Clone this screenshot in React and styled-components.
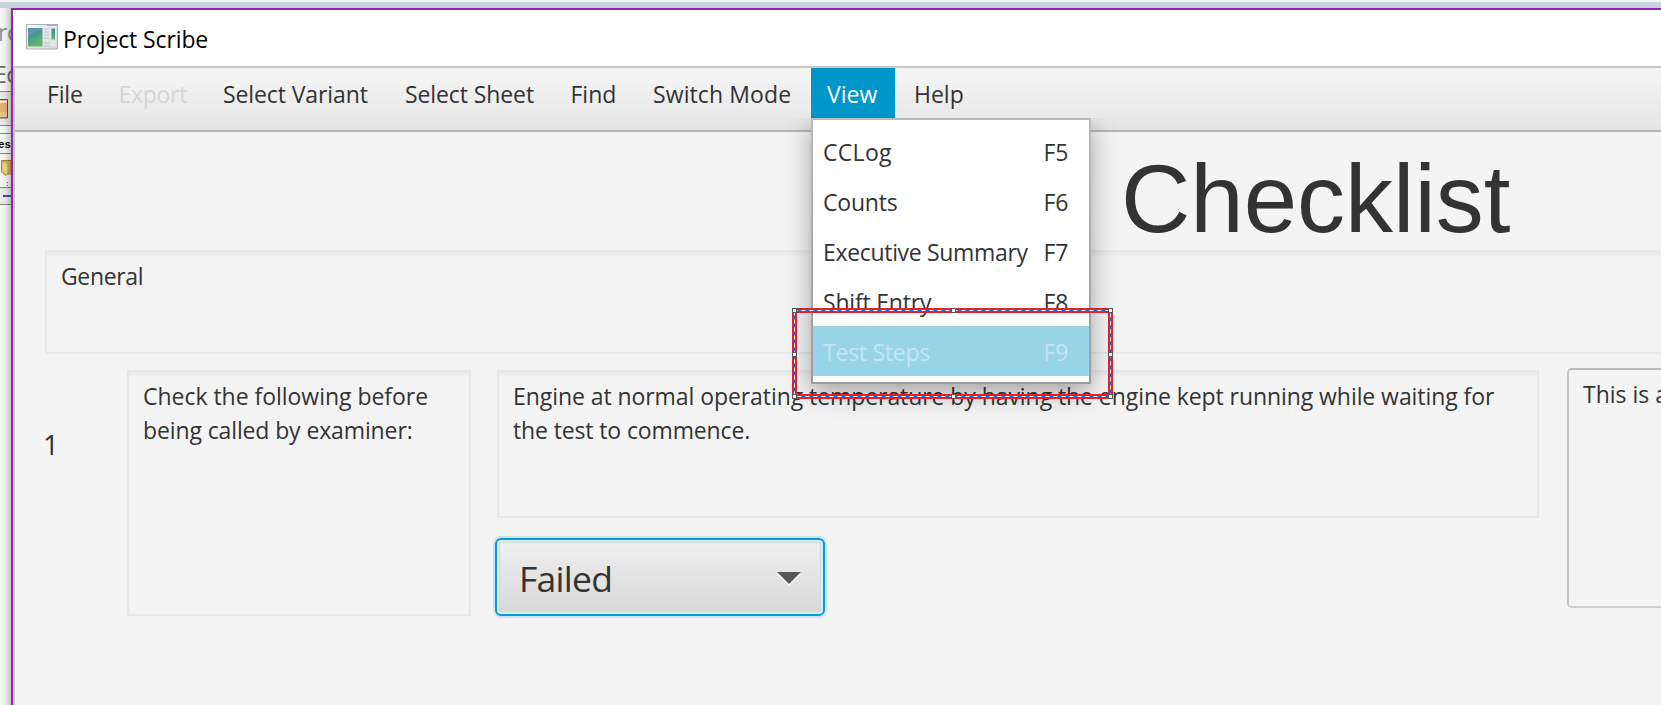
import React from "react";
import styled, { createGlobalStyle } from "styled-components";

const GlobalStyle = createGlobalStyle`
  * { box-sizing: border-box; }
  body {
    margin: 0;
    overflow: hidden;
    background: #fff;
    color: #333;
    font: 23px/34px "Open Sans", "Noto Sans", sans-serif;
  }
`;

const Desktop = styled.div`
  position: relative;
  display: flex;
  flex-direction: column;
  width: 1661px;
  height: 705px;
  overflow: hidden;
`;

const DesktopEdge = styled.div`
  flex: none;
  height: 8px;
  border-top: 2px solid #f1f4f7;
  background: linear-gradient(#cfd2d6 1px, #c5d0e1 1px);
`;

const DesktopBody = styled.div`
  flex: 1;
  display: flex;
  min-height: 0;
`;

const BackWindow = styled.aside`
  position: relative;
  flex: none;
  display: flex;
  flex-direction: column;
  width: 11px;
  overflow: hidden;
  white-space: nowrap;
  background: #fafafa;

  &::after {
    content: "";
    position: absolute;
    inset: 0;
    background: linear-gradient(90deg, rgba(0, 0, 0, 0) 0%, rgba(0, 0, 0, 0.06) 50%, rgba(0, 0, 0, 0.22) 100%);
  }
`;

const BackText = styled.div`
  height: ${(p) => p.$height}px;
  line-height: ${(p) => p.$line}px;
  margin-left: ${(p) => p.$shift}px;
  letter-spacing: -0.5px;
  color: ${(p) => p.$color};
`;

const BackTool = styled.div`
  display: flex;
  align-items: center;
  height: 35px;
  border-top: 1px solid #8d8d8d;
  border-bottom: 1px solid #8d8d8d;
  background: #ececec;
`;

const BackHeader = styled.div`
  height: 21px;
  margin-top: 7px;
  border-top: 1px solid #8b8b93;
  border-bottom: 1px solid #8b8b93;
  font: bold 11.5px/21px "Liberation Sans", sans-serif;
  color: #000;
  text-indent: -2px;
`;

const BackTree = styled.div`
  height: 34px;
  padding: 6px 0 0 1px;
  border-bottom: 1px solid #8b8b93;
  svg { display: block; }
`;

const BackStatus = styled.div`
  height: 17px;
  padding: 7px 0 0 3px;
  border-bottom: 1px solid #8b8b93;
  background: #eeeeee;
  &::before {
    content: "";
    display: block;
    height: 2px;
    background: #4254a4;
  }
`;

const Window = styled.main`
  flex: 1;
  display: flex;
  flex-direction: column;
  min-width: 0;
  border-top: 2px solid #8f2b9f;
  border-left: 2px solid #8f2b9f;
  background: #fff;
`;

const TitleBar = styled.header`
  flex: none;
  display: flex;
  align-items: center;
  gap: 5px;
  height: 56px;
  padding: 1px 0 0 13px;
  letter-spacing: -0.12px;
  color: #000;
  svg { margin-top: -4px; }
`;

const Client = styled.div`
  flex: 1;
  display: flex;
  flex-direction: column;
  min-height: 0;
  border-top: 2px solid #c8c8c8;
  border-left: 2px solid #c8c6c8;
  background: #f4f4f4;
`;

const MenuBar = styled.nav`
  flex: none;
  display: flex;
  align-items: flex-start;
  height: 64px;
  padding-left: 16px;
  border-bottom: 2px solid #b5b5b5;
  background: linear-gradient(#f4f4f4 15%, #e4e4e4);
`;

const MenuButton = styled.div`
  position: relative;
  flex: none;
  width: ${(p) => p.$width}px;
  height: 50px;
  padding-left: 16px;
  line-height: 52px;
  white-space: nowrap;
  letter-spacing: ${(p) => p.$spacing || 0}px;
  color: ${(p) => (p.$active ? "#fff" : p.$disabled ? "#d6d6d6" : "#333")};
  background: ${(p) => (p.$active ? "#0096c9" : "transparent")};
`;

const Dropdown = styled.div`
  position: absolute;
  z-index: 2;
  top: 50px;
  left: 0;
  width: 280px;
  padding: 6px 0;
  border: 2px solid #b5b5b5;
  border-image: linear-gradient(#b9b9b9, #9c9c9c) 1;
  background: #fff;
  box-shadow: 0 8px 24px rgba(0, 0, 0, 0.34);
  clip-path: inset(0 -40px -50px -40px);
`;

const DropdownItem = styled.div`
  display: flex;
  justify-content: space-between;
  height: 50px;
  padding: 0 21px 0 10px;
  line-height: 52px;
  letter-spacing: ${(p) => p.$spacing}px;
  color: ${(p) => (p.$selected ? "#c3e6f2" : "#333")};
  background: ${(p) => (p.$selected ? "#99d5e9" : "transparent")};
`;

const Shortcut = styled.span`
  letter-spacing: -0.3px;
`;

const Heading = styled.h1`
  flex: none;
  height: 118px;
  margin: 0;
  padding: 8px 0 0 1106px;
  font: 400 96px/118px "Liberation Sans", Arial, sans-serif;
`;

const Field = styled.div`
  flex: none;
  width: ${(p) => p.$width}px;
  height: ${(p) => p.$height}px;
  padding: 7px 14px;
  border: 2px solid #e8e8e8;
  box-shadow: inset 0 4px 4px -2px rgba(0, 0, 0, 0.05);
  white-space: nowrap;
`;

const GeneralField = styled(Field)`
  margin-left: 30px;
  letter-spacing: -0.35px;
`;

const NoteField = styled(Field)`
  margin: -2px 0 0 28px;
  border-color: #bababa #c4c4c4 #cccccc;
  border-radius: 5px;
  box-shadow: none;
`;

const Line = styled.div`
  letter-spacing: ${(p) => p.$spacing || 0}px;
`;

const StepRow = styled.section`
  display: flex;
  align-items: flex-start;
  margin-top: 16px;
  padding-left: 28px;
`;

const StepNumber = styled.div`
  flex: none;
  width: 84px;
  padding-top: 57px;
  font-size: 28px;
`;

const StepDetail = styled.div`
  display: flex;
  flex-direction: column;
  gap: 20px;
  margin-left: 26px;
`;

const ResultSelect = styled.div`
  display: flex;
  align-items: center;
  justify-content: space-between;
  width: 330px;
  height: 78px;
  margin-left: -2px;
  padding: 1px 19px 0 22px;
  border: 2px solid #039ed3;
  border-radius: 6px;
  background: linear-gradient(#efefef, #d8d8d8);
  box-shadow:
    0 0 0 2px rgba(3, 158, 211, 0.16),
    inset 0 0 0 2px #dcebf0,
    inset 0 0 0 3px #c6dde4;
  font-size: 35.5px;
  line-height: 74px;
  letter-spacing: -0.75px;
`;

const Selection = styled.svg`
  position: absolute;
  z-index: 3;
  left: 790px;
  top: 306px;
`;

const AppIcon = () => (
  <svg width="32" height="26" viewBox="0 0 32 26">
    <defs>
      <linearGradient id="pane" x1="0" y1="0" x2="0.4" y2="1">
        <stop offset="0" stopColor="#4e7fae" />
        <stop offset="0.5" stopColor="#4a9a90" />
        <stop offset="1" stopColor="#64b86c" />
      </linearGradient>
      <linearGradient id="frame" x1="0" y1="0" x2="1" y2="1">
        <stop offset="0" stopColor="#f6f8f9" />
        <stop offset="1" stopColor="#d6dadd" />
      </linearGradient>
    </defs>
    <rect x="0.5" y="0.5" width="31" height="24.5" fill="url(#frame)" stroke="#a9b0b8" />
    <path d="M21 1.5h10" stroke="#aab3ba" />
    <rect x="2" y="4" width="14.5" height="18.5" fill="url(#pane)" />
    <path d="M2 13Q7 7 16.5 6V4H2z" fill="#fff" opacity=".1" />
    <path d="M18 5h5M18 8h5M18 11h5M18 14h5M18 19h5M18 22h5" stroke="#cbd0d3" strokeWidth="1.3" />
    <path d="M25 18h5M25 21h5" stroke="#e6e9eb" strokeWidth="1.3" />
    <rect x="25.5" y="4.5" width="3.5" height="11" fill="url(#pane)" />
  </svg>
);

const BookIcon = () => (
  <svg width="9" height="22" viewBox="0 0 9 22">
    <path d="M0 1.5H7.5V20H0" fill="#e6b273" stroke="#6e4b1e" />
    <path d="M0 2.5H7V5H0" fill="#f8ead0" />
    <path d="M0 14H7V19H0" fill="#efc48c" />
  </svg>
);

const FolderIcon = () => (
  <svg width="10" height="27" viewBox="0 0 10 27">
    <path d="M.5.5H10V14H5V15.5L.5 12z" fill="#dfb95f" stroke="#a8842f" />
    <path d="M1 1L7 3V13L5 15L1 12z" fill="#f2d98a" stroke="#b7943d" strokeWidth=".7" />
    <path d="M6.5 22v1M6.5 25v1" stroke="#777" />
  </svg>
);

const MENUS = [
  { label: "File", width: 71.5, spacing: -0.2 },
  { label: "Export", width: 104.5, disabled: true, spacing: -0.3 },
  { label: "Select Variant", width: 182, spacing: -0.1 },
  { label: "Select Sheet", width: 165.5, spacing: -0.1 },
  { label: "Find", width: 82.5 },
  { label: "Switch Mode", width: 174, spacing: 0.1 },
  { label: "View", width: 84, active: true },
  { label: "Help", width: 84, nudge: true },
];

const HelpButton = styled(MenuButton)`
  padding-left: 19px;
`;

const VIEW_ITEMS = [
  { label: "CCLog", shortcut: "F5", spacing: 0.3 },
  { label: "Counts", shortcut: "F6", spacing: -0.2 },
  { label: "Executive Summary", shortcut: "F7", spacing: -0.32 },
  { label: "Shift Entry", shortcut: "F8", spacing: -0.2 },
  { label: "Test Steps", shortcut: "F9", spacing: -0.25, selected: true },
];

const HANDLES = [
  [4.5, 4.5], [163.5, 4.5], [320.5, 4.5],
  [4.5, 48.5], [320.5, 48.5],
  [4.5, 90.5], [163.5, 90.5], [320.5, 90.5],
];

const ViewMenu = () => (
  <Dropdown>
    {VIEW_ITEMS.map((item) => (
      <DropdownItem key={item.label} $selected={item.selected} $spacing={item.spacing}>
        <span>{item.label}</span>
        <Shortcut>{item.shortcut}</Shortcut>
      </DropdownItem>
    ))}
  </Dropdown>
);

export default function App() {
  return (
    <>
      <GlobalStyle />
      <Desktop>
        <DesktopEdge />
        <DesktopBody>
          <BackWindow>
            <BackText $height={47} $line={48} $shift={-2} $color="#8b95a3">ro</BackText>
            <BackText $height={36} $line={38} $shift={-6} $color="#6b6b6b">Ec</BackText>
            <BackTool><BookIcon /></BackTool>
            <BackHeader>es</BackHeader>
            <BackTree><FolderIcon /></BackTree>
            <BackStatus />
          </BackWindow>
          <Window>
            <TitleBar>
              <AppIcon />
              Project Scribe
            </TitleBar>
            <Client>
              <MenuBar>
                {MENUS.map((m) => {
                  const Button = m.nudge ? HelpButton : MenuButton;
                  return (
                    <Button key={m.label} $width={m.width} $active={m.active} $disabled={m.disabled} $spacing={m.spacing}>
                      {m.label}
                      {m.active && <ViewMenu />}
                    </Button>
                  );
                })}
              </MenuBar>
              <Heading>Checklist</Heading>
              <GeneralField $width={1640} $height={104}>General</GeneralField>
              <StepRow>
                <StepNumber>1</StepNumber>
                <Field $width={344} $height={246}>
                  <Line $spacing={-0.03}>Check the following before</Line>
                  <Line $spacing={-0.12}>being called by examiner:</Line>
                </Field>
                <StepDetail>
                  <Field $width={1042} $height={148}>
                    <Line $spacing={-0.07}>
                      Engine at normal operating temperature by having the engine kept running while waiting for
                    </Line>
                    <Line $spacing={-0.13}>the test to commence.</Line>
                  </Field>
                  <ResultSelect>
                    Failed
                    <svg width="30" height="16" viewBox="0 0 30 16">
                      <path d="M3 4H27L15 16z" fill="#fff" opacity=".8" />
                      <path d="M3 2H27L15 14z" fill="#575757" />
                    </svg>
                  </ResultSelect>
                </StepDetail>
                <NoteField $width={200} $height={240}>This is a</NoteField>
              </StepRow>
            </Client>
          </Window>
        </DesktopBody>
        <Selection width="326" height="96" viewBox="0 0 326 96">
          <rect x="4.5" y="4.5" width="316" height="86" fill="none" stroke="#ed1c24" strokeWidth="5" />
          <rect x="4.5" y="4.5" width="316" height="86" fill="none" stroke="#fff" />
          <rect x="4.5" y="4.5" width="316" height="86" fill="none" stroke="#0078d7" strokeDasharray="4 4" strokeDashoffset="-3" />
          {HANDLES.map(([x, y]) => (
            <rect key={`${x}-${y}`} x={x - 2} y={y - 2} width="4" height="4" fill="#fff" stroke="#555" />
          ))}
        </Selection>
      </Desktop>
    </>
  );
}
